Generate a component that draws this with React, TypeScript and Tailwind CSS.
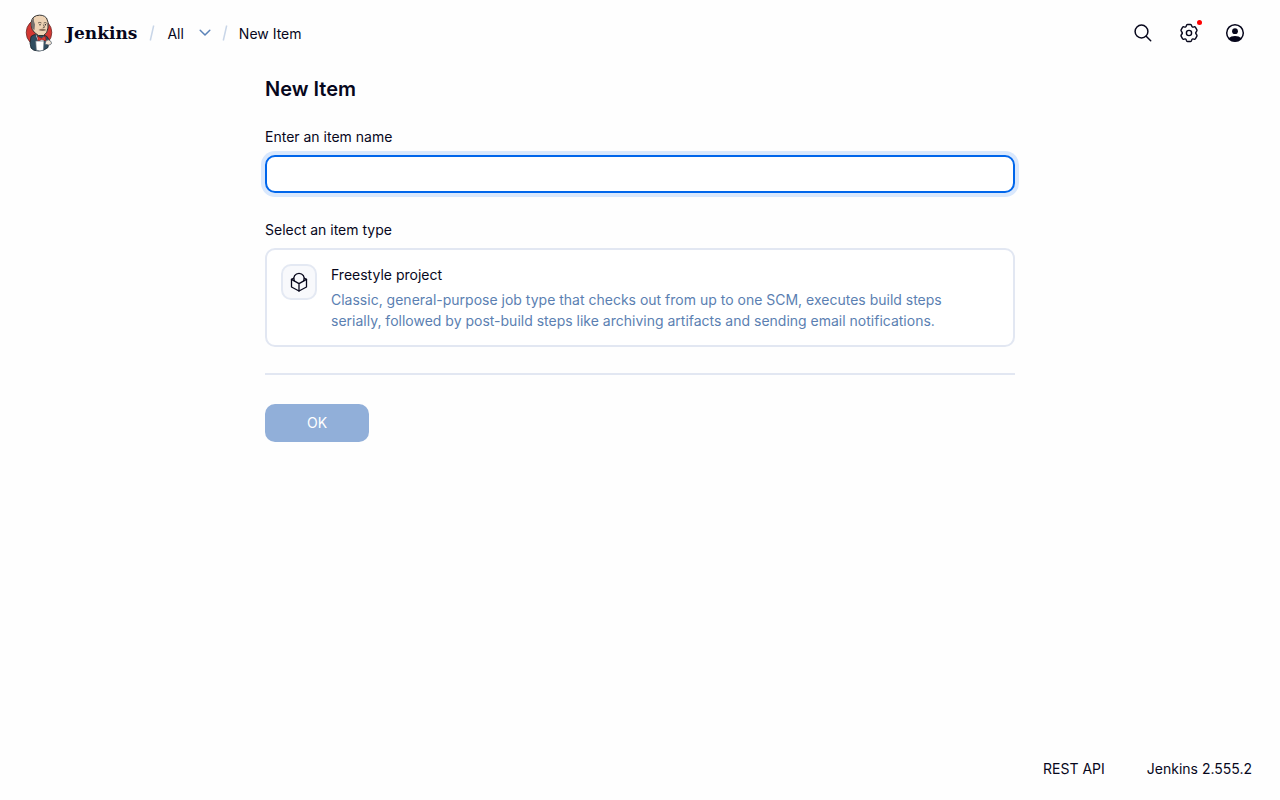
import { useState } from "react";

function JenkinsLogo() {
  return (
    <svg viewBox="0 0 28 38" className="h-[38px] w-7" aria-hidden="true">
      <ellipse cx="14" cy="18.500" rx="12.800" ry="13.500" fill="#d33833" stroke="#5c1f1d" strokeWidth="0.7" />
      <path d="M5 29 L6 22.500 Q9 20 12 20.500 L19 21 Q23 22 24 26 L23 33.500 Q19 37 13.500 37 Q8 37 6 34 Z" fill="#2f4d60" stroke="#16232c" strokeWidth="0.8" />
      <path d="M10.500 20 L14.500 26.500 L19 22.500 L19 27 L13 27 Z" fill="#fff" />
      <path d="M6.300 12 Q5.300 3.500 11.500 1.600 Q18 0 21.500 4 Q24 8 23 14 Q22.500 19.500 18.500 21.500 Q13 23 9.500 18.500 Q6.800 16 6.300 12 Z" fill="#eed3b5" stroke="#232323" strokeWidth="0.9" />
      <path d="M6.500 12 Q5.800 6 9 3.700 Q8.300 7.500 10 10.500 L9.500 16 Q7 15.500 6.500 12 Z" fill="#77716f" />
      <path d="M22.300 8 Q24 10.500 23 14.500 Q22 11.500 22.300 8 Z" fill="#77716f" />
      <path d="M13 9 Q14.800 7.800 16.500 9 M18.700 9 Q20.500 8 21.800 9.300 M18.300 10.500 L19.500 13.300 L17.800 13.800" fill="none" stroke="#3a3028" strokeWidth="0.7" />
      <circle cx="15" cy="10.700" r="0.7" fill="#232323" />
      <circle cx="20.400" cy="10.700" r="0.7" fill="#232323" />
      <path d="M13.500 15.900 Q17.500 13.800 21.500 16 Q17.500 17.800 13.500 15.900 Z" fill="#8a6f5c" />
      <path d="M12.800 22.200 L16.500 24.500 L20.500 22 L21 27 L16.800 25.500 L13 27.200 Z" fill="#dc3b35" stroke="#8d1714" strokeWidth="0.6" />
      <path d="M10.700 27 H19 L18.500 36.200 Q15 37.600 11.300 36.200 Z" fill="#fff" stroke="#596773" strokeWidth="0.7" />
      <path d="M20.800 27 Q23.500 24.500 26 27.500 Q27.500 30.800 23.700 31 L20 30.300 Z" fill="#f4e5d6" stroke="#435363" strokeWidth="0.7" />
    </svg>
  );
}

function SearchIcon() {
  return (
    <svg viewBox="0 0 20 20" className="size-5" fill="none" stroke="currentColor" strokeWidth="1.5" strokeLinecap="round" aria-hidden="true">
      <circle cx="8.500" cy="8.500" r="6.400" />
      <path d="M13.200 13.200 L17.700 17.700" />
    </svg>
  );
}

function GearIcon() {
  return (
    <svg viewBox="0 0 20 20" className="size-5" fill="none" stroke="currentColor" strokeWidth="1.400" strokeLinejoin="round" aria-hidden="true">
      <circle cx="10" cy="10" r="2.600" />
      <path d="M8.500 1.500 H11.500 Q12.400 1.500 12.600 2.600 Q12.900 4.600 14.800 3.900 Q15.900 3.400 16.500 4.300 L17.900 6.800 Q18.300 7.700 17.500 8.400 Q15.900 10 17.500 11.600 Q18.300 12.300 17.900 13.200 L16.500 15.700 Q15.900 16.600 14.800 16.100 Q12.900 15.400 12.600 17.400 Q12.400 18.500 11.500 18.500 H8.500 Q7.600 18.500 7.400 17.400 Q7.100 15.400 5.200 16.100 Q4.100 16.600 3.500 15.700 L2.100 13.200 Q1.700 12.300 2.500 11.600 Q4.100 10 2.500 8.400 Q1.700 7.700 2.100 6.800 L3.500 4.300 Q4.100 3.400 5.200 3.900 Q7.100 4.600 7.400 2.600 Q7.600 1.500 8.500 1.500 Z" />
    </svg>
  );
}

function AccountIcon() {
  return (
    <svg viewBox="0 0 20 20" className="size-5" aria-hidden="true">
      <circle cx="10" cy="10" r="8.300" fill="none" stroke="currentColor" strokeWidth="1.500" />
      <circle cx="10" cy="8.200" r="2.900" fill="currentColor" />
      <path d="M3.500 15.300 Q6 12.900 10 12.900 Q14 12.900 16.500 15.300 Q13.800 18.500 10 18.500 Q6.200 18.500 3.500 15.300 Z" fill="currentColor" />
    </svg>
  );
}

function FreestyleIcon() {
  return (
    <svg viewBox="0 0 20 20" className="size-5" fill="none" stroke="currentColor" strokeWidth="1.300" strokeLinejoin="round" strokeLinecap="round" aria-hidden="true">
      <path d="M5.300 8.700 A5.200 5.200 0 1 1 14.700 8.700" />
      <path d="M4.600 6.300 L2.500 7.400 V15 L10 19 L17.500 15 V7.400 L15.400 6.300" />
      <path d="M2.500 7.400 L10 11.600 L17.500 7.400 M10 11.600 V19" />
    </svg>
  );
}

function Slash() {
  return (
    <svg viewBox="0 0 6 16" className="h-4 w-1.5 text-[#c9d6e8]" fill="none" stroke="currentColor" strokeWidth="1.500" aria-hidden="true">
      <path d="M4.700 0.500 L1.300 15.500" />
    </svg>
  );
}

export default function App() {
  const [name, setName] = useState("");

  return (
    <div className="flex min-h-screen flex-col bg-[#fefefe] font-['Inter',sans-serif] text-sm font-normal text-[#07071c]">
      <header className="flex h-[66px] items-center justify-between pr-[35px] pl-[25px]">
        <nav aria-label="Breadcrumb" className="flex items-center">
          <a href="#home" className="flex items-center gap-[13px]">
            <JenkinsLogo />
            <span className="font-['DejaVu_Serif',serif] text-[17px] leading-6 font-bold">Jenkins</span>
          </a>
          <span className="ml-3"><Slash /></span>
          <a href="#all" className="ml-3 pt-0.5 leading-5">All</a>
          <button type="button" aria-label="All menu" className="ml-[15px] text-[#5b83b8]">
            <svg viewBox="0 0 12 12" className="size-3" fill="none" stroke="currentColor" strokeWidth="1.500" strokeLinecap="round" strokeLinejoin="round" aria-hidden="true">
              <path d="M1.200 3.200 L6 8 L10.800 3.200" />
            </svg>
          </button>
          <span className="ml-[11px]"><Slash /></span>
          <a href="#new" className="ml-[11px] pt-0.5 leading-5">New Item</a>
        </nav>
        <div className="flex items-center gap-[26px]">
          <button type="button" aria-label="Search"><SearchIcon /></button>
          <a href="#manage" aria-label="Manage Jenkins" className="relative">
            <GearIcon />
            <span className="absolute -top-[3px] -right-[3px] size-[5px] rounded-full bg-[#ff0000]" />
          </a>
          <a href="#account" aria-label="Account"><AccountIcon /></a>
        </div>
      </header>

      <main className="mx-auto w-full max-w-[750px] flex-1 pt-2">
        <h1 className="text-xl leading-[30px] font-semibold">New Item</h1>
        <form onSubmit={(e) => e.preventDefault()}>
          <label htmlFor="name" className="mt-[23px] block leading-5">Enter an item name</label>
          <input
            id="name"
            type="text"
            value={name}
            onChange={(e) => setName(e.target.value)}
            autoComplete="off"
            className="mt-2 block h-[38px] w-full rounded-[10px] border-2 border-[#0066eb] bg-white px-3 ring-4 ring-[#d9e8fd] outline-none"
          />
          <fieldset className="mt-[27px]">
            <legend className="leading-5">Select an item type</legend>
            <label className="mt-2 flex gap-[14px] rounded-[10px] border-2 border-[#e2e7f2] bg-white p-[14px]">
              <input type="radio" name="mode" value="freestyle" className="sr-only" />
              <span className="flex size-9 shrink-0 items-center justify-center rounded-[10px] border-2 border-[#e4e9f3] bg-[#f8f9fc]">
                <FreestyleIcon />
              </span>
              <span className="max-w-[640px]">
                <span className="block leading-[22px]">Freestyle project</span>
                <span className="mt-[3px] block leading-[21px] text-[#5b7fb2]">
                  Classic, general-purpose job type that checks out from up to one SCM, executes build steps serially, followed by post-build steps like archiving artifacts and sending email notifications.
                </span>
              </span>
            </label>
          </fieldset>
          <hr className="mt-[26px] border-t-2 border-[#e2e7f2]" />
          <button type="submit" disabled={!name} className="mt-[29px] h-[38px] w-[104px] rounded-[10px] bg-[#91afd9] text-white">
            OK
          </button>
        </form>
      </main>

      <footer className="flex justify-end gap-[42px] pr-7 pb-[21px] leading-5">
        <a href="#api">REST API</a>
        <button type="button">Jenkins 2.555.2</button>
      </footer>
    </div>
  );
}
